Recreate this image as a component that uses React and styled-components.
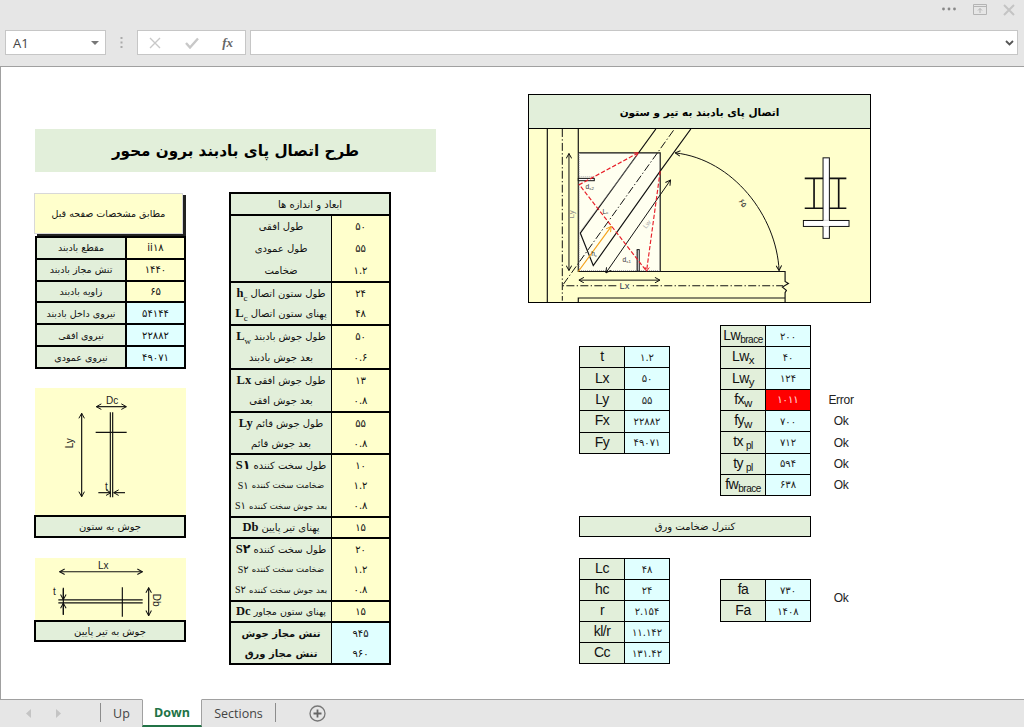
import React from 'react';
import styled, { createGlobalStyle } from 'styled-components';

const GREEN = '#e2efda';
const YELLOW = '#ffffcc';
const BLUE = '#e0ffff';
const persian = '"DejaVu Sans", sans-serif';
const latin = '"Liberation Sans", "DejaVu Sans", sans-serif';

const Global = createGlobalStyle`
  html, body { margin: 0; padding: 0; background: #fff; }
  * { box-sizing: border-box; }
`;

const Page = styled.div`
  width: 1024px;
  height: 727px;
  display: flex;
  flex-direction: column;
  overflow: hidden;
  font-family: ${persian};
  color: #111;
`;

/* ---------- excel chrome ---------- */
const TopBar = styled.div`
  height: 66px;
  flex: none;
  background: #e6e6e6;
  display: flex;
  flex-direction: column;
`;
const WindowRow = styled.div`
  height: 30px;
  display: flex;
  justify-content: flex-end;
  align-items: flex-start;
  padding: 4px 9px 0 0;
  gap: 16px;
`;
const WindowIcon = styled.svg`
  display: block;
`;
const FormulaRow = styled.div`
  height: 25px;
  display: flex;
  padding: 0 6px 0 5px;
`;
const NameBox = styled.div`
  width: 101px;
  background: #fff;
  border: 1px solid #c6c6c6;
  display: flex;
  align-items: center;
  justify-content: space-between;
  padding: 0 6px 0 7px;
  font: 13px "Open Sans", sans-serif;
  color: #444;
`;
const Caret = styled.span`
  width: 0;
  height: 0;
  border-left: 4px solid transparent;
  border-right: 4px solid transparent;
  border-top: 4px solid #777;
`;
const Grip = styled.div`
  width: 31px;
  display: flex;
  justify-content: center;
  align-items: center;
`;
const FxBox = styled.div`
  width: 109px;
  background: #fff;
  border: 1px solid #c6c6c6;
  display: flex;
  align-items: center;
  justify-content: space-between;
  padding: 0 12px 0 11px;
`;
const FxLabel = styled.span`
  font: italic bold 13px "Liberation Serif", serif;
  color: #666;
`;
const FormulaInput = styled.div`
  flex: 1;
  margin-left: 4px;
  background: #fff;
  border: 1px solid #c6c6c6;
  display: flex;
  justify-content: flex-end;
  align-items: center;
  padding-right: 3px;
`;
const Sheet = styled.div`
  flex: 1;
  background: #fff;
  border-top: 1px solid #a0a0a0;
  border-left: 1px solid #a0a0a0;
  display: flex;
  align-items: flex-start;
  min-height: 0;
`;
const TabBar = styled.div`
  height: 28px;
  flex: none;
  background: #e6e6e6;
  border-top: 1px solid #a0a0a0;
  display: flex;
  align-items: stretch;
  font: 12.5px "Open Sans", sans-serif;
  color: #444;
`;
const TabNav = styled.div`
  width: 100px;
  display: flex;
  align-items: center;
  gap: 24px;
  padding-left: 26px;
`;
const Tab = styled.div`
  display: flex;
  align-items: center;
  justify-content: center;
  width: ${p => p.$w}px;
  margin-top: ${p => (p.$active ? -1 : 0)}px;
  ${p => p.$active && `
    background: #fff;
    color: #217346;
    font-weight: 700;
    border-bottom: 2px solid #217346;
    border-left: 1px solid #a0a0a0;
    border-right: 1px solid #a0a0a0;
    border-top: 1px solid #fff;
  `}
`;
const TabRule = styled.span`
  width: 1px;
  margin: 3px 0 5px;
  background: #8c8c8c;
`;
const AddTab = styled.div`
  margin-left: 33px;
  display: flex;
  align-items: center;
`;

/* ---------- left part of the sheet ---------- */
const LeftPart = styled.div`
  width: 402px;
  margin: 62px 0 0 33px;
  flex: none;
`;
const Title = styled.div`
  height: 43px;
  margin-left: 1px;
  background: ${GREEN};
  display: flex;
  align-items: center;
  justify-content: center;
  font-size: 15.2px;
  font-weight: 700;
  color: #000;
  direction: rtl;
`;
const Columns = styled.div`
  display: flex;
  margin-top: 20px;
`;
const InputColumn = styled.div`
  width: 152px;
  padding-top: 1px;
  margin-right: 43px;
`;
const NoteBox = styled.div`
  width: 149px;
  height: 41px;
  margin-bottom: 2px;
  background: ${YELLOW};
  border: 1px solid #d8d8d8;
  box-shadow: 3px 2px 0 #222;
  display: flex;
  align-items: center;
  justify-content: center;
  font-size: 9.5px;
  direction: rtl;
`;
const InputTable = styled.div`
  height: 133px;
  margin-left: 1px;
  display: flex;
  flex-direction: column;
  gap: 2px;
  background: #000;
  border: 2px solid #000;
`;
const InputRow = styled.div`
  flex: 1;
  display: grid;
  grid-template-columns: 88px 1fr;
  gap: 2px;
`;
const Cell = styled.div`
  background: ${p => p.$bg || GREEN};
  display: flex;
  align-items: center;
  justify-content: center;
  font-size: ${p => p.$size || 9.5}px;
  direction: ${p => p.$dir || 'rtl'};
  white-space: nowrap;
  overflow: hidden;
`;
const Sketch = styled.div`
  height: ${p => p.$h}px;
  margin: ${p => p.$top}px 0 0 1px;
  background: ${YELLOW};
`;
const SketchSvg = styled.svg`
  display: block;
  width: 100%;
  height: 100%;
`;
const Caption = styled.div`
  height: ${p => p.$h}px;
  background: ${GREEN};
  border: 2px solid #000;
  display: flex;
  align-items: center;
  justify-content: center;
  font-size: 10px;
  direction: rtl;
`;

const DimTable = styled.div`
  width: 162px;
  height: 473px;
  border: 2px solid #000;
  display: flex;
  flex-direction: column;
`;
const DimHeader = styled.div`
  height: 22px;
  flex: none;
  background: ${GREEN};
  border-bottom: 2px solid #000;
  display: flex;
  align-items: center;
  justify-content: center;
  font-size: 10px;
  direction: rtl;
`;
const DimGroup = styled.div`
  height: ${p => p.$h}px;
  flex: none;
  display: grid;
  grid-template-columns: 101px 1fr;
  border-bottom: ${p => (p.$last ? 0 : 2)}px solid #000;
`;
const DimLabels = styled.div`
  background: ${GREEN};
  border-right: 1px solid #000;
  display: flex;
  flex-direction: column;
`;
const DimValues = styled.div`
  background: ${p => (p.$blue ? BLUE : YELLOW)};
  display: flex;
  flex-direction: column;
`;
const DimLabel = styled.div`
  flex: 1;
  display: flex;
  align-items: center;
  justify-content: center;
  gap: 3px;
  direction: rtl;
  white-space: nowrap;
  font-size: ${p => p.$size || 10}px;
  font-weight: ${p => (p.$bold ? 700 : 400)};
`;
const SerifTag = styled.span`
  font: bold 12.5px "Liberation Serif", "DejaVu Sans", serif;
  direction: ltr;
  unicode-bidi: isolate;
  ${p => p.$small && 'font: 10px "Liberation Serif", "DejaVu Sans", serif;'}
`;
const SerifSub = styled.sub`
  font-size: 9px;
  line-height: 0;
  font-weight: 400;
`;
const DimValue = styled.div`
  flex: 1;
  display: flex;
  align-items: center;
  justify-content: center;
  font-size: 10px;
`;

/* ---------- right part of the sheet ---------- */
const RightPart = styled.div`
  width: 343px;
  margin: 27px 0 0 92px;
  flex: none;
`;
const FigureHead = styled.div`
  height: 35px;
  background: ${GREEN};
  border: 1px solid #000;
  display: flex;
  align-items: center;
  justify-content: center;
  font-size: 10.5px;
  font-weight: 700;
  color: #000;
  direction: rtl;
`;
const Figure = styled.div`
  height: 174px;
  background: ${YELLOW};
  border: 1px solid #000;
  border-top: 0;
`;
const Checks = styled.div`
  margin: 22px 0 0 51px;
  width: 292px;
`;
const CheckRow = styled.div`
  display: flex;
  align-items: flex-start;
`;
const KeyTable = styled.div`
  width: 91px;
  height: ${p => p.$h}px;
  margin: ${p => p.$top || 0}px ${p => p.$right || 0}px 0 0;
  border: 1px solid #000;
  border-bottom: 0;
  display: flex;
  flex-direction: column;
  flex: none;
`;
const KeyRow = styled.div`
  flex: 1;
  display: grid;
  grid-template-columns: 45px 1fr;
  border-bottom: 1px solid #000;
`;
const KeyName = styled.div`
  background: ${GREEN};
  border-right: 1px solid #000;
  display: flex;
  align-items: center;
  justify-content: center;
  font: 14px ${latin};
  color: #111;
  white-space: nowrap;
`;
const KeyText = styled.span`
  letter-spacing: -0.5px;
  margin-top: -2px;
`;
const KeySub = styled.sub`
  font-size: ${p => (p.$long ? 10 : 11.5)}px;
  line-height: 0;
  margin-left: ${p => (p.$gap ? 3 : 0)}px;
  vertical-align: -3px;
`;
const KeyValue = styled.div`
  background: ${p => (p.$alert ? '#ff0000' : BLUE)};
  color: ${p => (p.$alert ? '#ffe0e0' : '#222')};
  display: flex;
  align-items: center;
  justify-content: center;
  font-size: 10px;
`;
const Statuses = styled.div`
  width: 60px;
  height: ${p => p.$h}px;
  margin-top: ${p => p.$top || 0}px;
  display: flex;
  flex-direction: column;
`;
const Status = styled.div`
  flex: 1;
  display: flex;
  align-items: center;
  justify-content: center;
  font: 12px ${latin};
  letter-spacing: -0.3px;
  color: #222;
`;
const ControlBox = styled.div`
  width: 232px;
  height: 21px;
  margin: 20px 0 21px;
  background: ${GREEN};
  border: 1px solid #000;
  display: flex;
  align-items: center;
  justify-content: center;
  font-size: 10px;
  direction: rtl;
`;

/* ---------- data ---------- */
const inputs = [
  ['مقطع بادبند', 'ii۱۸', YELLOW],
  ['تنش مجاز بادبند', '۱۴۴۰', YELLOW],
  ['زاویه بادبند', '۶۵', YELLOW],
  ['نیروی داخل بادبند', '۵۴۱۴۴', BLUE],
  ['نیروی افقی', '۲۲۸۸۲', BLUE],
  ['نیروی عمودی', '۴۹۰۷۱', BLUE],
];

const dimGroups = [
  { h: 67, rows: [['طول افقی', null, '۵۰'], ['طول عمودی', null, '۵۵'], ['ضخامت', null, '۱.۲']] },
  { h: 43, rows: [['طول ستون اتصال', ['h', 'c'], '۲۴'], ['پهنای ستون اتصال', ['L', 'c'], '۴۸']] },
  { h: 44, rows: [['طول جوش بادبند', ['L', 'w'], '۵۰'], ['بعد جوش بادبند', null, '۰.۶']] },
  { h: 43, rows: [['طول جوش افقی', ['Lx'], '۱۳'], ['بعد جوش افقی', null, '۰.۸']] },
  { h: 42, rows: [['طول جوش قائم', ['Ly'], '۵۵'], ['بعد جوش قائم', null, '۰.۸']] },
  { h: 63, rows: [['طول سخت کننده', ['S۱'], '۱۰'], ['ضخامت سخت کننده', ['S۱', null, true], '۱.۲', 8.5], ['بعد جوش سخت کننده', ['S۱', null, true], '۰.۸', 8.5]] },
  { h: 21, rows: [['پهنای تیر پایین', ['Db'], '۱۵']] },
  { h: 63, rows: [['طول سخت کننده', ['S۲'], '۲۰'], ['ضخامت سخت کننده', ['S۲', null, true], '۱.۲', 8.5], ['بعد جوش سخت کننده', ['S۲', null, true], '۰.۸', 8.5]] },
  { h: 21, rows: [['پهنای ستون مجاور', ['Dc'], '۱۵', 9.5]] },
  { h: 40, last: true, strong: true, rows: [['تنش مجاز جوش', null, '۹۴۵'], ['تنش مجاز ورق', null, '۹۶۰']] },
];

const forces = [['t', '۱.۲'], ['Lx', '۵۰'], ['Ly', '۵۵'], ['Fx', '۲۲۸۸۲'], ['Fy', '۴۹۰۷۱']];
const welds = [
  ['Lw', 'brace', '۲۰۰'],
  ['Lw', 'x', '۴۰'],
  ['Lw', 'y', '۱۲۴'],
  ['fx', 'w', '۱۰۱۱', 'Error'],
  ['fy', 'w', '۷۰۰', 'Ok'],
  ['tx', 'pl', '۷۱۲', 'Ok'],
  ['ty', 'pl', '۵۹۴', 'Ok'],
  ['fw', 'brace', '۶۳۸', 'Ok'],
];
const plate = [['Lc', '۴۸'], ['hc', '۲۴'], ['r', '۲.۱۵۴'], ['kl/r', '۱۱.۱۴۲'], ['Cc', '۱۳۱.۴۲']];
const axial = [['fa', '۷۳۰'], ['Fa', '۱۴۰۸']];

/* ---------- drawings ---------- */
const ArrowMarkers = () => (
  <defs>
    <marker id="open" viewBox="0 0 12 12" refX="11" refY="6" markerWidth="20" markerHeight="20" markerUnits="userSpaceOnUse" orient="auto-start-reverse">
      <path d="M2 1 L11 6 L2 11" fill="none" stroke="#111" strokeWidth="1.8" />
    </marker>
    <marker id="orange" viewBox="0 0 12 12" refX="11" refY="6" markerWidth="20" markerHeight="20" markerUnits="userSpaceOnUse" orient="auto-start-reverse">
      <path d="M2 1 L11 6 L2 11" fill="none" stroke="#f5a21b" strokeWidth="1.8" />
    </marker>
    <marker id="red" viewBox="0 0 12 12" refX="11" refY="6" markerWidth="16" markerHeight="16" markerUnits="userSpaceOnUse" orient="auto-start-reverse">
      <path d="M2 1 L11 6 L2 11" fill="none" stroke="#e8202a" strokeWidth="2" />
    </marker>
  </defs>
);

const ConnectionDrawing = () => (
  <SketchSvg viewBox="27 118 1024 522" preserveAspectRatio="none">
    <ArrowMarkers />
    <rect x="175" y="190" width="246" height="357" fill="#fffff0" />
    <g fill="none" stroke="#111" strokeWidth="3.5">
      <path d="M82 118V640M175 118V548H796V578L806 584L788 595L800 605L796 612V640M175 640V628H796" />
      <path d="M175 190H421V548" />
      <path d="M408 118L181 432L220 530L421 245L513 118" />
    </g>
    <g fill="none" stroke="#aaa" strokeWidth="3" strokeDasharray="3 3">
      <path d="M178 190V545H421M178 262H224M350 482V545" />
      <path d="M356 192L183 424" strokeDasharray="2 2" />
    </g>
    <path d="M127 118V636M461 122L127 591H790" fill="none" stroke="#111" strokeWidth="3" strokeDasharray="24 7 4 7" />
    <rect x="175" y="267" width="48" height="7" fill="#fff" stroke="#111" strokeWidth="3" />
    <rect x="352" y="482" width="6" height="65" fill="#fff" stroke="#111" strokeWidth="3" />
    <g stroke="#111" strokeWidth="3" fill="none" markerStart="url(#open)" markerEnd="url(#open)">
      <path d="M147 192V545" />
      <path d="M177 574H420" />
      <path d="M452 272L258 552" />
      <path d="M466 190C640 210 770 380 778 545" />
    </g>
    <path d="M175 548L274 412" stroke="#f5a21b" strokeWidth="3.5" fill="none" markerEnd="url(#orange)" />
    <g stroke="#e8202a" strokeWidth="3.5" fill="none" strokeDasharray="13 6">
      <path d="M355 190L178 286L380 547" markerStart="url(#red)" />
      <path d="M421 245L380 547" markerEnd="url(#red)" />
    </g>
    <g fill="none" stroke="#111" strokeWidth="5">
      <path d="M855 267H980M855 357H980M883 267V357M957 267V357" />
    </g>
    <g fill="#fff" stroke="#111" strokeWidth="3">
      <rect x="910" y="205" width="19" height="243" />
      <rect x="851" y="394" width="137" height="18" />
    </g>
    <path d="M911 393H928V413H911Z" fill="#fff" stroke="none" />
    <rect x="292" y="580" width="46" height="22" fill="#ffffcc" />
    <g fontFamily="Liberation Sans, sans-serif" fill="#333">
      <text x="299" y="600" fontSize="28" fill="#2a3a55">Lx</text>
      <text x="197" y="300" fontSize="20">d<tspan fontSize="13" dy="3">s2</tspan></text>
      <text x="248" y="373" fontSize="20">L<tspan fontSize="13" dy="3">c</tspan></text>
      <text x="214" y="500" fontSize="20">h<tspan fontSize="13" dy="3">c</tspan></text>
      <text x="308" y="519" fontSize="20">d<tspan fontSize="13" dy="3">s1</tspan></text>
      <text x="-388" y="162" fontSize="24" fill="#888" transform="rotate(-90)">Ly</text>
      <text x="0" y="0" fontSize="20" fill="#aaa" transform="translate(378 420) rotate(-50)">Lw</text>
      <text x="0" y="0" fontSize="24" fontFamily="DejaVu Sans, sans-serif" transform="translate(655 335) rotate(55)">۶۵</text>
    </g>
  </SketchSvg>
);

const ColumnWeldDrawing = () => (
  <SketchSvg viewBox="30 24 453 381" preserveAspectRatio="none">
    <ArrowMarkers />
    <g fill="none" stroke="#111" strokeWidth="3.5">
      <path d="M256 97V352M263 97V352M212 157H305" />
      <g markerStart="url(#open)" markerEnd="url(#open)">
        <path d="M214 80H304" />
        <path d="M170 100V350" />
      </g>
      <path d="M220 338H258" markerEnd="url(#open)" />
      <path d="M300 338H266" markerEnd="url(#open)" />
    </g>
    <g fontFamily="Liberation Sans, sans-serif" fill="#222" fontSize="30">
      <text x="243" y="72">Dc</text>
      <text x="240" y="330">t</text>
      <text x="0" y="0" transform="translate(144 205) rotate(-90)">Ly</text>
    </g>
  </SketchSvg>
);

const BeamWeldDrawing = () => (
  <SketchSvg viewBox="30 533 453 185" preserveAspectRatio="none">
    <ArrowMarkers />
    <g fill="none" stroke="#111" strokeWidth="3.5">
      <path d="M100 658H353M100 667H353M292 620V708M115 622V702" />
      <path d="M104 574H352" markerStart="url(#open)" markerEnd="url(#open)" />
      <path d="M115 625V657" markerEnd="url(#open)" />
      <path d="M115 702V668" markerEnd="url(#open)" />
      <path d="M371 622V705" markerStart="url(#open)" markerEnd="url(#open)" />
    </g>
    <g fontFamily="Liberation Sans, sans-serif" fill="#222" fontSize="30">
      <text x="219" y="566">Lx</text>
      <text x="84" y="642">t</text>
      <text x="0" y="0" transform="translate(385 640) rotate(90)">Db</text>
    </g>
  </SketchSvg>
);

const KeyCell = ({ name, sub }) => (
  <KeyName>
    <KeyText>
      {name}
      {sub && <KeySub $gap={sub === 'pl'} $long={sub === 'brace' || sub === 'pl'}>{sub}</KeySub>}
    </KeyText>
  </KeyName>
);

const PlainKeyTable = ({ rows, h, top, right }) => (
  <KeyTable $h={h} $top={top} $right={right}>
    {rows.map(([name, value]) => (
      <KeyRow key={name}>
        <KeyCell name={name} />
        <KeyValue>{value}</KeyValue>
      </KeyRow>
    ))}
  </KeyTable>
);

export default function App() {
  return (
    <Page>
      <Global />
      <TopBar>
        <WindowRow>
          <WindowIcon width="16" height="10" viewBox="0 0 16 10">
            <circle cx="2.5" cy="5" r="1.4" fill="#888" />
            <circle cx="8" cy="5" r="1.4" fill="#888" />
            <circle cx="13.5" cy="5" r="1.4" fill="#888" />
          </WindowIcon>
          <WindowIcon width="14" height="11" viewBox="0 0 14 11">
            <path d="M.5.5H13.5V10.5H.5ZM.5 2.5H13.5M7 9V4.5M5 6.5L7 4.5L9 6.5" fill="none" stroke="#b4b4b4" />
          </WindowIcon>
          <WindowIcon width="12" height="12" viewBox="0 0 12 12">
            <path d="M1 1L11 11M11 1L1 11" stroke="#c4c4c4" strokeWidth="2" />
          </WindowIcon>
        </WindowRow>
        <FormulaRow>
          <NameBox>A1<Caret /></NameBox>
          <Grip>
            <svg width="3" height="11" viewBox="0 0 3 11">
              <path d="M1.5 0V2M1.5 4.500V6.500M1.5 9V11" stroke="#aaa" strokeWidth="2" />
            </svg>
          </Grip>
          <FxBox>
            <svg width="12" height="12" viewBox="0 0 12 12">
              <path d="M1 1L11 11M11 1L1 11" stroke="#c8c8c8" strokeWidth="1.4" />
            </svg>
            <svg width="14" height="12" viewBox="0 0 14 12">
              <path d="M1 6L5 10.500L13 1.500" fill="none" stroke="#c8c8c8" strokeWidth="2.4" />
            </svg>
            <FxLabel>fx</FxLabel>
          </FxBox>
          <FormulaInput>
            <svg width="9" height="6" viewBox="0 0 9 6">
              <path d="M1 1L4.500 4.500L8 1" fill="none" stroke="#555" strokeWidth="1.8" />
            </svg>
          </FormulaInput>
        </FormulaRow>
      </TopBar>

      <Sheet>
        <LeftPart>
          <Title>طرح اتصال پای بادبند برون محور</Title>
          <Columns>
            <InputColumn>
              <NoteBox>مطابق مشخصات صفحه قبل</NoteBox>
              <InputTable>
                {inputs.map(([label, value, bg]) => (
                  <InputRow key={label}>
                    <Cell>{label}</Cell>
                    <Cell $bg={bg} $dir="ltr" $size={10}>{value}</Cell>
                  </InputRow>
                ))}
              </InputTable>
              <Sketch $h={127} $top={19}><ColumnWeldDrawing /></Sketch>
              <Caption $h={23}>جوش به ستون</Caption>
              <Sketch $h={62} $top={20}><BeamWeldDrawing /></Sketch>
              <Caption $h={22}>جوش به تیر پایین</Caption>
            </InputColumn>

            <DimTable>
              <DimHeader>ابعاد و اندازه ها</DimHeader>
              {dimGroups.map(group => (
                <DimGroup key={group.rows[0][0] + group.h + group.rows[0][2]} $h={group.h} $last={group.last}>
                  <DimLabels>
                    {group.rows.map(([label, tag, , size]) => (
                      <DimLabel key={label} $size={size} $bold={group.strong}>
                        <span>{label}</span>
                        {tag && (
                          <SerifTag $small={tag[2]}>
                            {tag[0]}
                            {tag[1] && <SerifSub>{tag[1]}</SerifSub>}
                          </SerifTag>
                        )}
                      </DimLabel>
                    ))}
                  </DimLabels>
                  <DimValues $blue={group.strong}>
                    {group.rows.map(([label, , value]) => (
                      <DimValue key={label}>{value}</DimValue>
                    ))}
                  </DimValues>
                </DimGroup>
              ))}
            </DimTable>
          </Columns>
        </LeftPart>

        <RightPart>
          <FigureHead>اتصال پای بادبند به تیر و ستون</FigureHead>
          <Figure><ConnectionDrawing /></Figure>
          <Checks>
            <CheckRow>
              <PlainKeyTable rows={forces} h={108} top={21} right={50} />
              <KeyTable $h={171}>
                {welds.map(([name, sub, value]) => (
                  <KeyRow key={name + sub}>
                    <KeyCell name={name} sub={sub} />
                    <KeyValue $alert={value === '۱۰۱۱'}>{value}</KeyValue>
                  </KeyRow>
                ))}
              </KeyTable>
              <Statuses $h={171}>
                {welds.map(([name, sub, , status]) => (
                  <Status key={name + sub}>{status}</Status>
                ))}
              </Statuses>
            </CheckRow>
            <ControlBox>کنترل ضخامت ورق</ControlBox>
            <CheckRow>
              <PlainKeyTable rows={plate} h={106} right={50} />
              <PlainKeyTable rows={axial} h={43} top={21} />
              <Statuses $h={43} $top={18}><Status>Ok</Status></Statuses>
            </CheckRow>
          </Checks>
        </RightPart>
      </Sheet>

      <TabBar>
        <TabNav>
          <svg width="6" height="9" viewBox="0 0 6 9"><path d="M5 0V9L0 4.500Z" fill="#c4c4c4" /></svg>
          <svg width="6" height="9" viewBox="0 0 6 9"><path d="M0 0V9L5 4.500Z" fill="#c4c4c4" /></svg>
        </TabNav>
        <TabRule />
        <Tab $w={41}>Up</Tab>
        <Tab $w={60} $active>Down</Tab>
        <Tab $w={73}>Sections</Tab>
        <TabRule />
        <AddTab>
          <svg width="17" height="17" viewBox="0 0 17 17">
            <circle cx="8.500" cy="8.500" r="7.500" fill="none" stroke="#777" strokeWidth="1.3" />
            <path d="M8.500 4.500V12.500M4.500 8.500H12.500" stroke="#666" strokeWidth="1.8" />
          </svg>
        </AddTab>
      </TabBar>
    </Page>
  );
}
